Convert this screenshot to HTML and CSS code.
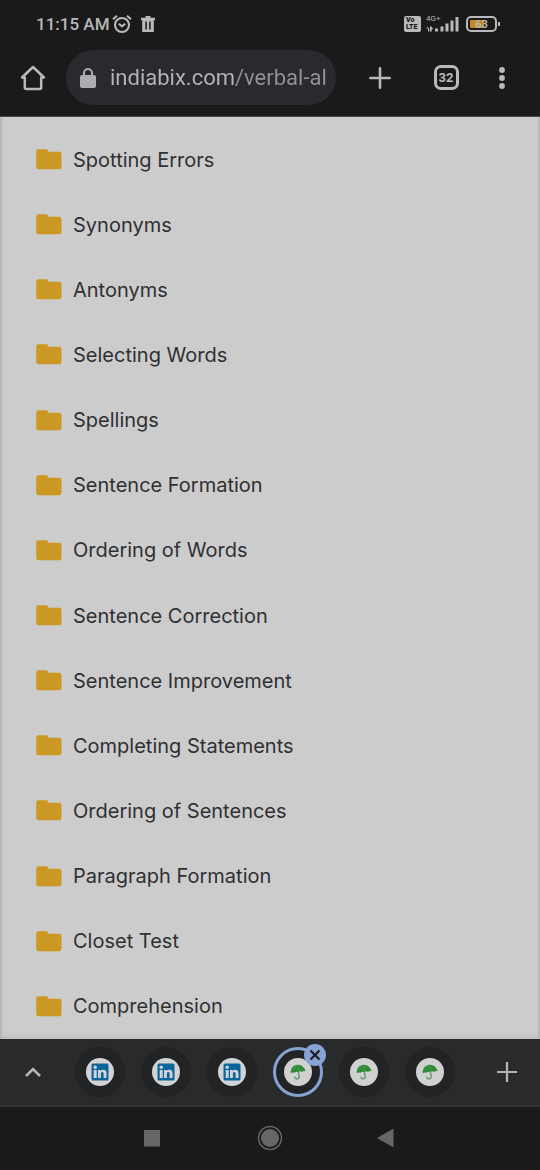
FILE: index.html
```html
<!DOCTYPE html>
<html lang="en">
<head>
<meta charset="utf-8">
<meta name="viewport" content="width=device-width, initial-scale=1">
<title>Verbal Ability</title>
<link rel="stylesheet" href="styles.css">
</head>
<body>
<svg class="defs" aria-hidden="true">
  <symbol id="folder" viewBox="0 0 26 21"><path d="M2.500.3h7.500q1.500 0 2 1.200l.5 1.200h10.700q2.300 0 2.300 2.300V18q0 2.300-2.300 2.300H2.500Q.2 20.300.2 18V2.600Q.2.300 2.500.3z" fill="#cb9823"/></symbol>
  <symbol id="linkedin" viewBox="0 0 28 28"><circle cx="14" cy="14" r="14" fill="#d2d3d4"/><rect x="5.500" y="5.500" width="17" height="17" rx="1.500" fill="#0b649c"/><circle cx="9.200" cy="9.300" r="1.700" fill="#d2d3d4"/><path d="M7.700 12h3v8h-3zM12 12h2.700v1c.5-.8 1.400-1.300 2.600-1.300 2.400 0 3.200 1.500 3.200 3.800V20h-2.900v-4c0-1.100-.2-1.900-1.300-1.900S14.900 15 14.900 16v4H12z" fill="#d2d3d4"/></symbol>
  <symbol id="umbrella" viewBox="0 0 28 28"><circle cx="14" cy="14" r="14" fill="#d0d1d0"/><path d="M13.800 12l1.500 6.200c.4 2.900-3.500 3.700-4.400 1" fill="none" stroke="#6f9a78" stroke-width="1.500" stroke-linecap="round"/><path d="M6.700 15.300C6.600 10.600 8.800 7.600 13 6.800c4.300-.4 7.600 2.500 8.700 6.700-1.400-.6-2.700-.5-3.700.4-1.300-.8-2.600-.7-3.800.1-1.300-.5-2.700-.3-3.700.8-1.300-.4-2.700-.3-3.800.5z" fill="#2e8c38"/><path d="M9.500 11.500c.7-2.200 1.800-3.400 3.500-4M14 12.500c.5-2 .3-3.500-.7-4.700" fill="none" stroke="#4ea355" stroke-width=".9"/></symbol>
</svg>
<div class="screen">
  <header class="chrome">
    <div class="status">
      <span class="clock">11:15 AM</span>
      <svg class="alarm" viewBox="0 0 20 20" fill="none" stroke="#b9b9b9" stroke-width="2.100"><circle cx="10" cy="11" r="7"/><path d="M1 5.200L5 1.800M19 5.200L15 1.800M6.800 9.800L10 12.400l3.200-2.600"/></svg>
      <svg class="trash" viewBox="0 0 14 16"><path d="M4.500 0h5v1.800H14v2.500h-1.200V16H1.200V4.300H0V1.800h4.500z" fill="#b9b9b9"/><path d="M5.100 5.500v8M8.900 5.500v8" stroke="#1a1a1a" stroke-width="1.500"/></svg>
      <span class="volte"><span>Vo</span><span>LTE</span></span>
      <span class="signal">
        <span class="network">4G+</span>
        <svg class="bars" viewBox="0 0 33 16" fill="#b9b9b9"><path d="M0 12.500l2-2v5h1.300v-3.500zM4 10.500h1.300l2 2.500H5.700v2.500H4zM9 12.500h3v3H9zM14.500 10.500h3v5h-3zM19.500 7.500h3v8h-3zM24.500 4.500h3v11h-3zM29.500 1h3v14.500h-3z"/></svg>
      </span>
      <span class="battery"><span class="level">63</span></span>
    </div>
    <div class="toolbar">
      <button class="tool home" aria-label="Home"><svg width="26" height="26" viewBox="0 0 26 26" fill="none" stroke="#b9b9b9" stroke-width="2.500" stroke-linejoin="round" stroke-linecap="round"><path d="M2 12.500L13 2l11 10.500h-2.800V22.500q0 1.500-1.500 1.500H6.300q-1.500 0-1.500-1.500V12.500z"/></svg></button>
      <label class="address">
        <svg class="lock" viewBox="0 0 16 20"><path d="M4 8V5a4 4 0 0 1 8 0v3" fill="none" stroke="#aaacb0" stroke-width="2"/><rect x="0" y="7" width="16" height="13" rx="2" fill="#aaacb0"/></svg>
        <input class="url" type="text" aria-label="Address" value="indiabix.com/verbal-al">
      </label>
      <button class="tool new" aria-label="New tab"><svg width="22" height="22" viewBox="0 0 22 22" stroke="#b9b9b9" stroke-width="2.600" stroke-linecap="round"><path d="M11 1.300v19.400M1.300 11h19.400"/></svg></button>
      <button class="tool switch" aria-label="Open tabs"><span class="count">32</span></button>
      <button class="tool more" aria-label="More"><svg width="8" height="24" viewBox="0 0 8 24" fill="#b9b9b9"><circle cx="4" cy="4" r="2.900"/><circle cx="4" cy="12" r="2.900"/><circle cx="4" cy="20" r="2.900"/></svg></button>
    </div>
  </header>
  <main class="page">
    <ul class="topics">
      <li><a href="#"><svg class="folder"><use href="#folder"/></svg>Spotting Errors</a></li>
      <li><a href="#"><svg class="folder"><use href="#folder"/></svg>Synonyms</a></li>
      <li><a href="#"><svg class="folder"><use href="#folder"/></svg>Antonyms</a></li>
      <li><a href="#"><svg class="folder"><use href="#folder"/></svg>Selecting Words</a></li>
      <li><a href="#"><svg class="folder"><use href="#folder"/></svg>Spellings</a></li>
      <li><a href="#"><svg class="folder"><use href="#folder"/></svg>Sentence Formation</a></li>
      <li><a href="#"><svg class="folder"><use href="#folder"/></svg>Ordering of Words</a></li>
      <li><a href="#"><svg class="folder"><use href="#folder"/></svg>Sentence Correction</a></li>
      <li><a href="#"><svg class="folder"><use href="#folder"/></svg>Sentence Improvement</a></li>
      <li><a href="#"><svg class="folder"><use href="#folder"/></svg>Completing Statements</a></li>
      <li><a href="#"><svg class="folder"><use href="#folder"/></svg>Ordering of Sentences</a></li>
      <li><a href="#"><svg class="folder"><use href="#folder"/></svg>Paragraph Formation</a></li>
      <li><a href="#"><svg class="folder"><use href="#folder"/></svg>Closet Test</a></li>
      <li><a href="#"><svg class="folder"><use href="#folder"/></svg>Comprehension</a></li>
    </ul>
  </main>
  <div class="tabs">
    <button class="tab-action" aria-label="Expand tabs"><svg width="18" height="12" viewBox="0 0 18 12" fill="none" stroke="#b2b3b5" stroke-width="2.600"><path d="M2 10l7-7 7 7"/></svg></button>
    <div class="tab-list">
      <button class="tab" aria-label="LinkedIn tab 1"><span class="disc"><svg class="site"><use href="#linkedin"/></svg></span></button>
      <button class="tab" aria-label="LinkedIn tab 2"><span class="disc"><svg class="site"><use href="#linkedin"/></svg></span></button>
      <button class="tab" aria-label="LinkedIn tab 3"><span class="disc"><svg class="site"><use href="#linkedin"/></svg></span></button>
      <button class="tab" aria-label="Current tab, close"><span class="disc current"><svg class="site"><use href="#umbrella"/></svg><svg class="close" viewBox="0 0 22 22"><circle cx="11" cy="11" r="11" fill="#86a2d2"/><path d="M6.500 6.500l9 9M15.500 6.500l-9 9" stroke="#1c1d20" stroke-width="2.200"/></svg></span></button>
      <button class="tab" aria-label="IndiaBIX tab 2"><span class="disc"><svg class="site"><use href="#umbrella"/></svg></span></button>
      <button class="tab" aria-label="IndiaBIX tab 3"><span class="disc"><svg class="site"><use href="#umbrella"/></svg></span></button>
    </div>
    <button class="tab-action" aria-label="Add tab"><svg width="20" height="20" viewBox="0 0 20 20" stroke="#b2b3b5" stroke-width="2.200"><path d="M10 0v20M0 10h20"/></svg></button>
  </div>
  <nav class="system">
    <button aria-label="Recent apps"><svg width="26" height="26" viewBox="0 0 26 26"><path d="M5 5h16v16.500H5z" fill="#666"/></svg></button>
    <button aria-label="Home screen"><svg width="26" height="26" viewBox="0 0 26 26"><circle cx="13" cy="13" r="11.500" fill="none" stroke="#666" stroke-width="1.500"/><circle cx="13" cy="13" r="9" fill="#666"/></svg></button>
    <button aria-label="Back"><svg width="26" height="26" viewBox="0 0 26 26"><path d="M2 13L18.500 3.500v19z" fill="#666"/></svg></button>
  </nav>
</div>
</body>
</html>
```
FILE: styles.css
```css
* { box-sizing: border-box; }

body {
  margin: 0;
  background: #1a1a1a;
  font-family: Roboto, "Liberation Sans", sans-serif;
}

button {
  border: 0;
  padding: 0;
  background: none;
  color: inherit;
  font: inherit;
  display: flex;
  align-items: center;
  justify-content: center;
}

svg { flex: none; display: block; }

.defs {
  position: absolute;
  width: 0;
  height: 0;
}

.screen {
  min-height: 100vh;
  display: flex;
  flex-direction: column;
}

/* Status bar and browser toolbar */

.chrome {
  color: #b9b9b9;
  border-bottom: 1px solid #4a4a4a;
}

.status {
  height: 50px;
  padding: 0 40px 2px 36px;
  display: flex;
  align-items: center;
}

.clock {
  font-size: 17px;
  font-weight: 500;
}

.alarm {
  width: 20px;
  height: 20px;
  margin-left: 2px;
}

.trash {
  width: 14px;
  height: 16px;
  margin-left: 9px;
}

.volte {
  width: 17px;
  height: 16px;
  margin-left: auto;
  border-radius: 2px;
  background: #b9b9b9;
  color: #1a1a1a;
  display: flex;
  flex-direction: column;
  justify-content: center;
  padding-left: 2px;
  font-size: 7px;
  line-height: 7px;
  font-weight: 900;
}

.signal {
  position: relative;
  margin-left: 5px;
}

.network {
  position: absolute;
  top: -1px;
  left: 0;
  font-size: 8px;
  line-height: 8px;
}

.bars {
  width: 33px;
  height: 16px;
}

.battery {
  position: relative;
  width: 31px;
  height: 16px;
  margin: 0 3px 0 7px;
  padding: 2px;
  border: 2px solid #b9b9b9;
  border-radius: 5px;
}

.battery::after {
  content: "";
  position: absolute;
  top: 4px;
  right: -5px;
  width: 2px;
  height: 4px;
  background: #b9b9b9;
}

.level {
  display: block;
  height: 8px;
  border-radius: 1px;
  background: linear-gradient(90deg, #c6871c 63%, transparent 63%);
  text-align: center;
  font-size: 11px;
  line-height: 9px;
  font-weight: 700;
}

.toolbar {
  height: 66px;
  display: flex;
  align-items: flex-start;
}

.tool { height: 55px; flex: none; }

.home { width: 66px; }

.address {
  flex: 1;
  min-width: 0;
  height: 55px;
  padding: 0 8px 0 14px;
  border-radius: 28px;
  background: #292a2d;
  display: flex;
  align-items: center;
  gap: 14px;
}

.lock {
  width: 16px;
  height: 20px;
}

.url {
  flex: 1;
  min-width: 0;
  border: 0;
  padding: 0;
  outline: 0;
  font-family: Roboto, "Liberation Sans", sans-serif;
  font-size: 22px;
  line-height: 28px;
  color: transparent;
  background: linear-gradient(90deg, #b4b6b9 125px, #919396 125px);
  -webkit-background-clip: text;
  background-clip: text;
}

.new { width: 88px; }

.switch { width: 44px; }

.more { width: 72px; padding-right: 5px; }

.count {
  width: 25px;
  height: 25px;
  border: 3px solid #b9b9b9;
  border-radius: 7px;
  font-size: 13px;
  line-height: 19px;
  font-weight: 700;
  text-align: center;
}

/* Topic list */

.page {
  flex: 1;
  display: flex;
  background: #cccccc;
  border: solid #b8b8b8;
  border-width: 0 2px;
  box-shadow: inset 0 -4px 4px -2px #bcbcbc;
}

.topics {
  flex: 1;
  display: flex;
  flex-direction: column;
  margin: 0;
  padding: 10px 34px 0;
  list-style: none;
  font-family: Inter, "Liberation Sans", sans-serif;
  font-size: 20px;
  line-height: 28px;
}

.topics li {
  flex: 1;
  min-height: 48px;
  display: flex;
  align-items: center;
}

.topics a {
  display: flex;
  align-items: center;
  gap: 11px;
  color: #2f3032;
  text-decoration: none;
}

.folder {
  width: 26px;
  height: 21px;
}

/* Tab strip */

.tabs {
  height: 68px;
  display: flex;
  align-items: center;
  background: #292a2c;
  border-bottom: 2px solid #303133;
}

.tab-action {
  flex: none;
  width: 66px;
  height: 66px;
}

.tab-list {
  flex: 1;
  display: flex;
  padding-left: 1px;
}

.tab {
  flex: none;
  width: 66px;
  height: 66px;
}

.disc {
  position: relative;
  width: 50px;
  height: 50px;
  border-radius: 50%;
  background: #222324;
  display: flex;
  align-items: center;
  justify-content: center;
}

.current { border: 3px solid #86a2d2; }

.site {
  width: 28px;
  height: 28px;
}

.close {
  position: absolute;
  top: -6px;
  right: -6px;
  width: 22px;
  height: 22px;
}

/* System navigation */

.system {
  height: 63px;
  padding-bottom: 2px;
  display: flex;
  align-items: center;
  justify-content: center;
}

.system button {
  width: 118px;
  height: 60px;
}
```
